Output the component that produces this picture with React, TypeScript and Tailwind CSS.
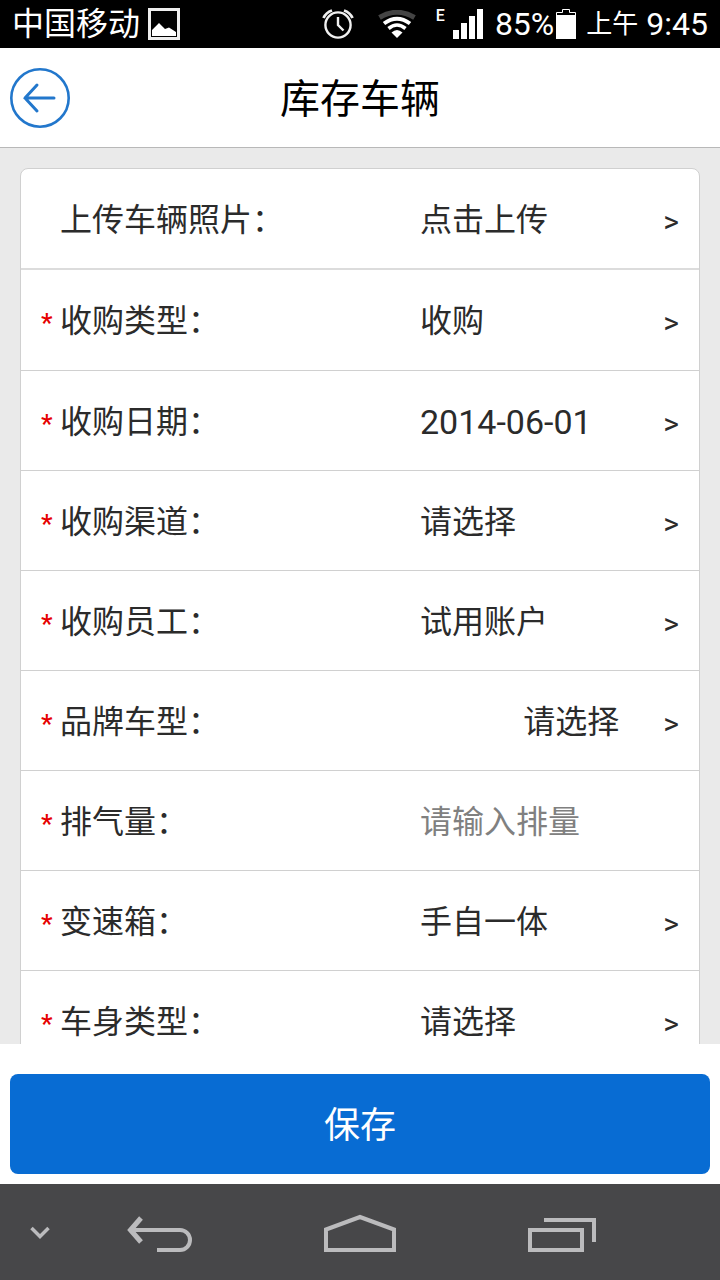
import {useState} from "react";

type Field = {
    id: string;
    label: string;
    kind: "upload" | "select" | "text" | "picker" | "input";
    value: string;
    options?: string[];
    required?: boolean;
};

const fields: Field[] = [
    {id: "photos", label: "上传车辆照片：", kind: "upload", value: "点击上传"},
    {id: "type", label: "收购类型：", kind: "select", value: "收购", options: ["收购"], required: true},
    {id: "date", label: "收购日期：", kind: "text", value: "2014-06-01", required: true},
    {id: "channel", label: "收购渠道：", kind: "select", value: "请选择", options: ["请选择"], required: true},
    {id: "staff", label: "收购员工：", kind: "select", value: "试用账户", options: ["试用账户"], required: true},
    {id: "brand", label: "品牌车型：", kind: "picker", value: "请选择", required: true},
    {id: "displacement", label: "排气量：", kind: "input", value: "请输入排量", required: true},
    {id: "gearbox", label: "变速箱：", kind: "select", value: "手自一体", options: ["手自一体"], required: true},
    {id: "body", label: "车身类型：", kind: "select", value: "请选择", options: ["请选择"], required: true},
];

function StatusBar() {
    return (
        <div className="flex h-12 shrink-0 items-center bg-black px-3 text-white">
            <span className="text-[32px] leading-10">中国移动</span>
            <svg className="ml-2 size-8" viewBox="0 0 32 32">
                <rect x="1.5" y="1.5" width="29" height="29" fill="none" stroke="#eee" strokeWidth="3" />
                <path d="M4 28V22L11 15L17 21L21 19.5L28 24V28Z" fill="#fff" />
            </svg>
            <svg className="ml-auto size-8" viewBox="0 0 32 32" fill="none" stroke="#f0f0f0" strokeWidth="2.4">
                <circle cx="16" cy="17" r="12.6" />
                <path d="M16 9V17L21.5 22.5" />
                <path d="M1.5 10Q4 4.5 10 2.5M30.5 10Q28 4.5 22 2.5" strokeWidth="2.8" />
            </svg>
            <svg className="ml-6 h-7 w-[38px]" viewBox="0 0 38 28" fill="none" strokeWidth="4">
                <path d="M1.5 7.5Q19 -3 36.5 7.5" stroke="#444" strokeWidth="5" />
                <path d="M6 13.5Q19 4 32 13.5" stroke="#fff" />
                <path d="M10.5 18.5Q19 11.5 27.5 18.5" stroke="#fff" strokeWidth="3.6" />
                <path d="M13.5 22.5Q19 17.5 24.5 22.5L19 28Z" fill="#fff" />
            </svg>
            <span className="ml-5 self-start pt-2 text-base leading-4 font-medium">E</span>
            <svg className="ml-2 h-[30px] w-[30px]" viewBox="0 0 30 30" fill="#fff">
                <rect x="0" y="21" width="6" height="9" />
                <rect x="8" y="14" width="6" height="16" />
                <rect x="16" y="7" width="6" height="23" />
                <rect x="24" y="0" width="6" height="30" />
            </svg>
            <span className="ml-3 text-[32px] leading-10">85%</span>
            <svg className="ml-0.5 h-[30px] w-5" viewBox="0 0 20 30">
                <path d="M0.5 29.5V3.5H6.5V0.5H13.5V3.5H19.5V29.5Z" fill="#000" stroke="#fff" />
                <rect x="0" y="6" width="20" height="24" fill="#fff" />
            </svg>
            <span className="ml-2.5 text-[26px] leading-10">上午</span>
            <span className="ml-2 text-[32px] leading-10">9:45</span>
        </div>
    );
}

function FieldRow({field}: {field: Field}) {
    const [value, setValue] = useState(field.kind === "input" ? "" : field.value);

    return (
        <div className="flex h-[100px] items-center border-b border-[#d0d0d0] px-5 pt-0.5 first:h-[101px] first:border-b-2 first:border-[#dcdcdc] nth-2:h-[101px]">
            <span
                aria-hidden="true"
                className="w-[19px] shrink-0 pt-1 text-[26px] leading-8 font-medium text-[#e60000]"
            >
                {field.required ? "*" : ""}
            </span>
            <label className="flex-1 leading-10 whitespace-nowrap" htmlFor={field.id}>
                {field.label}
            </label>
            <div className="flex w-[259px] shrink-0 items-center">
                {field.kind === "select" && (
                    <select
                        className="min-w-0 flex-1 appearance-none bg-transparent leading-10 outline-none"
                        id={field.id}
                        value={value}
                        onChange={(e) => setValue(e.target.value)}
                    >
                        {field.options?.map((option) => (
                            <option key={option}>{option}</option>
                        ))}
                    </select>
                )}
                {field.kind === "text" && (
                    <input
                        className="min-w-0 flex-1 bg-transparent text-[34px] leading-10 outline-none"
                        id={field.id}
                        type="text"
                        value={value}
                        onChange={(e) => setValue(e.target.value)}
                    />
                )}
                {field.kind === "input" && (
                    <input
                        className="min-w-0 flex-1 bg-transparent leading-10 outline-none placeholder:text-[#808080]"
                        id={field.id}
                        placeholder={field.value}
                        type="text"
                        value={value}
                        onChange={(e) => setValue(e.target.value)}
                    />
                )}
                {field.kind === "upload" && (
                    <button className="flex-1 text-left leading-10" id={field.id} type="button">
                        {value}
                    </button>
                )}
                {field.kind === "picker" && (
                    <button className="flex-1 pr-11 text-right leading-10" id={field.id} type="button">
                        {value}
                    </button>
                )}
                {field.kind !== "input" && (
                    <span aria-hidden="true" className="pt-1 text-[30px] leading-9">
                        &gt;
                    </span>
                )}
            </div>
        </div>
    );
}

function NavBar() {
    return (
        <nav className="flex h-24 shrink-0 items-center bg-[#474749] pt-1 text-[#bbbbbd]">
            <button aria-label="隐藏导航栏" className="flex w-20 justify-center" type="button">
                <svg className="h-4 w-5" viewBox="0 0 20 16" fill="none" stroke="currentColor" strokeWidth="3.5">
                    <path d="M1.5 2L10 10.5L18.5 2" />
                </svg>
            </button>
            <button aria-label="返回" className="flex w-40 justify-center" type="button">
                <svg className="h-10 w-[68px]" viewBox="0 0 68 40" fill="none" stroke="currentColor" strokeWidth="4">
                    <path d="M5 16H54A10 10 0 0 1 54 36H31" />
                    <path d="M15 4L4.5 16L15 28" strokeWidth="5" />
                </svg>
            </button>
            <button aria-label="主页" className="flex flex-1 justify-center" type="button">
                <svg className="h-10 w-[72px]" viewBox="0 0 72 40" fill="none" stroke="currentColor" strokeWidth="4">
                    <path d="M2 36V15.5L36 3L70 15.5V36Z" />
                </svg>
            </button>
            <button aria-label="最近任务" className="flex w-40 justify-center pl-1" type="button">
                <svg className="h-10 w-[68px]" viewBox="0 0 68 40" fill="none" stroke="currentColor" strokeWidth="4">
                    <path d="M2 16H54V36H2Z" />
                    <path d="M16 6H66V28" />
                </svg>
            </button>
            <span className="w-20" />
        </nav>
    );
}

export default function App() {
    return (
        <div className="flex h-screen flex-col bg-white font-[Roboto,'Noto_Sans_CJK_SC',sans-serif] text-[#2b2b2b]">
            <StatusBar />
            <header className="flex h-[100px] shrink-0 items-center border-b border-[#b8b8b8] px-2.5">
                <button aria-label="返回" className="size-[60px]" type="button">
                    <svg className="size-full" viewBox="0 0 60 60" fill="none" stroke="#2277cc">
                        <circle cx="30" cy="30" r="28.7" strokeWidth="2.6" />
                        <path d="M44 30H15M27 17L15 30L27 43" strokeWidth="3" strokeLinecap="round" />
                    </svg>
                </button>
                <h1 className="flex-1 pt-1 pr-[60px] text-center text-[40px] leading-[48px] text-black">
                    库存车辆
                </h1>
            </header>
            <main className="min-h-0 flex-1 overflow-hidden bg-[#eaeaea] px-5 pt-5">
                <form className="rounded-t-lg border border-[#d0d0d0] bg-white text-[32px]">
                    {fields.map((field) => (
                        <FieldRow key={field.id} field={field} />
                    ))}
                </form>
            </main>
            <footer className="shrink-0 px-2.5 pt-[30px] pb-2.5">
                <button className="h-[100px] w-full rounded-lg bg-[#086cd3] pt-1 text-4xl text-white" type="button">
                    保存
                </button>
            </footer>
            <NavBar />
        </div>
    );
}
